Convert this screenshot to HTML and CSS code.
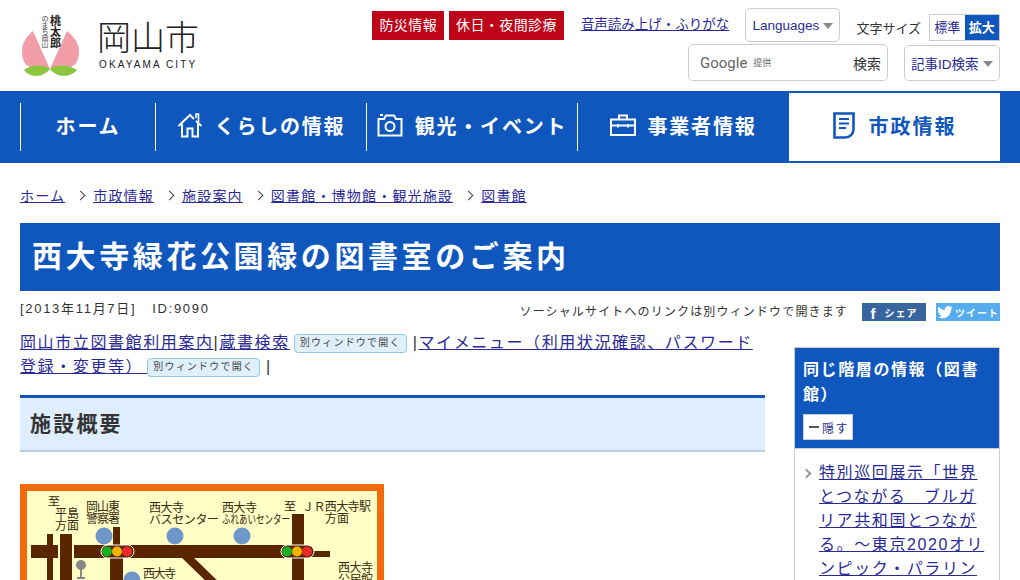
FILE: index.html
```html
<!DOCTYPE html>
<html lang="ja">
<head>
    <meta charset="UTF-8">
    <meta name="viewport" content="width=device-width, initial-scale=1.0">
    <title>西大寺緑花公園緑の図書室のご案内 | 岡山市</title>
    <link rel="stylesheet" href="styles.css">
</head>
<body>

    <header class="cabecera">
        <a class="logo" href="#">
            <svg width="180" height="70" viewBox="0 0 180 70">
                <path d="M13 19 C5 26 2 32 2 39 C2 48 5 53 10 55 C17 54 25 54 30 57 Z" fill="#f29ea9"/>
                <path d="M47 19 C55 26 59 32 59 39 C59 48 56 53 51 55 C44 54 35 54 30 57 Z" fill="#f29ea9"/>
                <path d="M4 58 C9 54 22 51 30 57 C24 65 11 67 4 58 Z" fill="#8cc63f"/>
                <path d="M30 57 C38 51 51 54 57 58 C49 67 36 65 30 57 Z" fill="#8cc63f"/>
                <text class="logo-momo" x="30" y="13">桃</text>
                <text class="logo-momo" x="30" y="24">太</text>
                <text class="logo-momo" x="30" y="35">郎</text>
                <text class="logo-nomachi" x="21.500" y="9">の</text>
                <text class="logo-nomachi" x="21.500" y="15.500">ま</text>
                <text class="logo-nomachi" x="21.500" y="22">ち</text>
                <text class="logo-nomachi" x="21.500" y="28.500">岡</text>
                <text class="logo-nomachi" x="21.500" y="35">山</text>
                <text class="logo-nombre" x="77" y="38">岡山市</text>
                <text class="logo-ingles" x="79" y="56">OKAYAMA CITY</text>
            </svg>
        </a>
        <div class="herramientas">
            <div class="fila">
                <a class="rojo" href="#">防災情報</a>
                <a class="rojo" href="#">休日・夜間診療</a>
                <a class="voz" href="#">音声読み上げ・ふりがな</a>
                <a class="caja idiomas" href="#">Languages<span class="flecha"></span></a>
                <span class="tam-texto">文字サイズ</span>
                <div class="tam-botones">
                    <a href="#">標準</a>
                    <a class="activo" href="#">拡大</a>
                </div>
            </div>
            <div class="fila fila-dos">
                <div class="caja buscador">
                    <span class="google">Google</span>
                    <span class="provisto">提供</span>
                    <span class="buscar">検索</span>
                </div>
                <a class="caja articulo" href="#">記事ID検索<span class="flecha"></span></a>
            </div>
        </div>
    </header>

    <nav class="menu">
        <a class="item item-home" href="#">ホーム</a>
        <a class="item" href="#">
            <svg width="26" height="25" viewBox="0 0 26 25" fill="none" stroke="#fff" stroke-width="2">
                <path d="M1.500 13 L13 2 L17 6 M19 8 L24.500 13"/>
                <path d="M19 5 V1 H21.500 V9" stroke-width="1.600"/>
                <path d="M5 11 V23.500 H10.500 V15.500 H15.500 V23.500 H21 V11"/>
            </svg>
            くらしの情報
        </a>
        <a class="item" href="#">
            <svg width="26" height="23" viewBox="0 0 26 23" fill="none" stroke="#fff" stroke-width="2">
                <path d="M1.500 5 H7 L9 1.500 H17 L19 5 H24.500 V21.500 H1.500 Z"/>
                <circle cx="13" cy="12.500" r="4.500"/>
                <path d="M3 1 H6"/>
            </svg>
            観光・イベント
        </a>
        <a class="item" href="#">
            <svg width="26" height="22" viewBox="0 0 26 22" fill="none" stroke="#fff" stroke-width="2">
                <path d="M1 5.500 H25 V21 H1 Z"/>
                <path d="M9 5 V1.500 H17 V5"/>
                <path d="M1 11.500 H25"/>
                <path d="M8 10 V13.500 M18 10 V13.500"/>
            </svg>
            事業者情報
        </a>
        <a class="item item-activo" href="#">
            <svg width="22" height="27" viewBox="0 0 22 27" fill="none" stroke="#0f57bd" stroke-width="2.600">
                <path d="M1.500 1.500 H20.500 V17 C20.500 22 17 25.500 12 25.500 H1.500 Z"/>
                <path d="M6 7 H16 M6 11.500 H16 M6 16 H13" stroke-width="1.800"/>
            </svg>
            市政情報
        </a>
    </nav>

    <div class="migas">
        <a href="#">ホーム</a>
        <span class="sep"></span>
        <a href="#">市政情報</a>
        <span class="sep"></span>
        <a href="#">施設案内</a>
        <span class="sep"></span>
        <a href="#">図書館・博物館・観光施設</a>
        <span class="sep"></span>
        <a href="#">図書館</a>
    </div>

    <h1 class="titulo">西大寺緑花公園緑の図書室のご案内</h1>

    <div class="info">
        <p class="fecha">[2013年11月7日]&nbsp;&nbsp; ID:9090</p>
        <div class="social">
            <span class="social-nota">ソーシャルサイトへのリンクは別ウィンドウで開きます</span>
            <a class="btn-fb" href="#"><b>f</b>シェア</a>
            <a class="btn-tw" href="#">
                <svg width="16" height="13" viewBox="0 0 24 20"><path fill="#fff" d="M24 2.400c-.9.4-1.800.7-2.800.8 1-.6 1.800-1.600 2.200-2.700-1 .6-2 1-3.100 1.200A4.900 4.900 0 0 0 11.900 6.200C7.800 6 4.200 4 1.700.9c-1.300 2.200-.6 5.100 1.500 6.500-.8 0-1.600-.2-2.200-.6 0 2.400 1.700 4.400 3.900 4.900-.7.2-1.500.2-2.200.1.600 2 2.400 3.400 4.600 3.400A9.900 9.900 0 0 1 0 16.700 14 14 0 0 0 7.500 19c9.100 0 14.300-7.700 14-14.600 1-.7 1.800-1.500 2.500-2z"/></svg>
                ツイート
            </a>
        </div>
    </div>

    <div class="cuerpo">
        <main class="principal">
            <p class="enlaces">
                <a href="#">岡山市立図書館利用案内</a>|<a href="#">蔵書検索</a> <span class="aviso">別ウィンドウで開く</span> |<a href="#">マイメニュー（利用状況確認、パスワード登録・変更等） </a> <span class="aviso">別ウィンドウで開く</span> |
            </p>

            <h2 class="seccion">施設概要</h2>

            <svg class="mapa" width="364" height="300" viewBox="0 0 364 300">
                <rect x="3.500" y="3.500" width="357" height="293" fill="#ffffc6" stroke="#f26a0c" stroke-width="7"/>
                <g fill="#5a2600">
                    <rect x="11" y="61" width="27" height="13"/>
                    <rect x="27" y="50" width="6" height="250"/>
                    <rect x="40" y="50" width="12" height="250"/>
                    <rect x="54" y="61" width="220" height="13"/>
                    <rect x="93" y="43" width="7" height="20"/>
                    <rect x="90" y="70" width="13" height="230"/>
                    <rect x="272" y="30" width="12" height="270"/>
                    <rect x="290" y="67" width="20" height="6"/>
                    <path d="M160 72 H172 L205 104 H193 Z"/>
                </g>
                <g fill="#6f97c9">
                    <circle cx="84" cy="52" r="8.500"/>
                    <circle cx="155" cy="52" r="8.500"/>
                    <circle cx="222" cy="52" r="8.500"/>
                    <circle cx="112" cy="96" r="8.500"/>
                </g>
                <circle cx="61" cy="81" r="5" fill="#888"/>
                <rect x="60" y="85" width="2" height="9" fill="#888"/>
                <rect x="57" y="93" width="8" height="2" fill="#888"/>
                <g>
                    <rect x="81" y="61" width="33" height="13" rx="6.500" fill="#5a2600" stroke="#fff"/>
                    <circle cx="87" cy="67.500" r="5" fill="#19b01f"/>
                    <circle cx="97" cy="67.500" r="5" fill="#f7b500"/>
                    <circle cx="107" cy="67.500" r="5" fill="#ea2a2a"/>
                    <rect x="261" y="61" width="33" height="13" rx="6.500" fill="#5a2600" stroke="#fff"/>
                    <circle cx="267" cy="67.500" r="5" fill="#19b01f"/>
                    <circle cx="277" cy="67.500" r="5" fill="#f7b500"/>
                    <circle cx="287" cy="67.500" r="5" fill="#ea2a2a"/>
                </g>
                <g class="mapa-texto">
                    <text x="28" y="22">至</text>
                    <text x="35" y="34">平島</text>
                    <text x="35" y="46">方面</text>
                    <text x="66" y="27" textLength="34">岡山東</text>
                    <text x="66" y="39" textLength="34">警察署</text>
                    <text x="129" y="28" textLength="35">西大寺</text>
                    <text x="129" y="40" textLength="70">バスセンター</text>
                    <text x="202" y="28" textLength="35">西大寺</text>
                    <text x="202" y="40" textLength="68" lengthAdjust="spacingAndGlyphs">ふれあいセンター</text>
                    <text x="264" y="27">至</text>
                    <text x="282" y="27" textLength="69">ＪＲ西大寺駅</text>
                    <text x="305" y="39">方面</text>
                    <text x="123" y="94" textLength="33">西大寺</text>
                    <text x="318" y="88" textLength="35">西大寺</text>
                    <text x="318" y="100" textLength="35">公民館</text>
                </g>
            </svg>
        </main>

        <aside class="lateral">
            <div class="lateral-cabeza">
                <h2>同じ階層の情報（図書館）</h2>
                <a class="ocultar" href="#"><span class="raya"></span>隠す</a>
            </div>
            <ul class="lateral-lista">
                <li><a href="#">特別巡回展示「世界とつながる　ブルガリア共和国とつながる。～東京2020オリンピック・パラリンピック～」</a></li>
            </ul>
        </aside>
    </div>

</body>
</html>
```

FILE: styles.css
```css
* {
    box-sizing: border-box;
}

html, body {
    height: 580px;
    overflow: hidden;
}

body {
    margin: 0;
    font-family: "Liberation Sans", "Noto Sans CJK JP", sans-serif;
    font-size: 16px;
    color: #333;
    background-color: #fff;
}

a {
    color: #2a2a96;
}

/* cabecera */
.cabecera {
    display: flex;
    justify-content: space-between;
    height: 91px;
    padding: 8px 20px 0 20px;
}

.logo {
    display: block;
    margin-top: 4px;
}

.logo svg {
    overflow: visible;
}

.logo-momo {
    font-size: 11px;
    font-weight: bold;
    fill: #222;
}

.logo-nomachi {
    font-size: 7px;
    fill: #444;
}

.logo-nombre {
    font-size: 34px;
    font-weight: 300;
    fill: #222;
}

.logo-ingles {
    font-size: 10px;
    fill: #222;
    letter-spacing: 2.1px;
}

.herramientas {
    display: flex;
    flex-direction: column;
    align-items: flex-end;
    gap: 2px;
}

.fila {
    display: flex;
    align-items: center;
    height: 34px;
}

.fila-dos {
    height: 37px;
}

.rojo {
    display: block;
    height: 29px;
    line-height: 28px;
    padding: 0 7px;
    margin-right: 5px;
    font-size: 14px;
    letter-spacing: 0.4px;
    color: #fff;
    background-color: #bd0419;
    text-decoration: none;
}

.voz {
    margin: 0 16px 4px 12px;
    font-size: 13.5px;
}

.caja {
    display: flex;
    align-items: center;
    background-color: #fff;
    border: 1px solid #ccc;
    border-radius: 5px;
    text-decoration: none;
}

.idiomas {
    width: 95px;
    height: 34px;
    padding-left: 6px;
    font-size: 13.5px;
}

.flecha {
    display: block;
    margin: 2px 0 0 4px;
    border-top: 6px solid #888;
    border-left: 5px solid transparent;
    border-right: 5px solid transparent;
}

.tam-texto {
    margin: 4px 8px 0 16px;
    font-size: 13px;
    color: #333;
}

.tam-botones {
    display: flex;
    width: 71px;
    height: 27px;
    margin-top: 4px;
    border: 1px solid #ccc;
}

.tam-botones a {
    display: block;
    flex: 1;
    line-height: 25px;
    text-align: center;
    font-size: 13px;
    text-decoration: none;
}

.tam-botones .activo {
    color: #fff;
    font-weight: bold;
    background-color: #0f57bd;
}

.buscador {
    width: 200px;
    height: 37px;
    padding: 0 6px 0 11px;
}

.google {
    font-family: "Roboto", sans-serif;
    font-size: 15px;
    color: #666;
}

.provisto {
    margin-left: 6px;
    font-size: 9px;
    color: #666;
}

.buscar {
    margin-left: auto;
    font-size: 14px;
    color: #333;
}

.articulo {
    width: 96px;
    height: 36px;
    margin-left: 16px;
    padding-left: 6px;
    font-size: 13.5px;
}

/* menu */
.menu {
    display: flex;
    align-items: center;
    height: 72px;
    padding: 2px 20px;
    background-color: #0f57bd;
}

.item {
    display: flex;
    align-items: center;
    justify-content: center;
    gap: 12px;
    width: 211px;
    height: 48px;
    padding-bottom: 4px;
    border-left: 1px solid #fff;
    font-size: 20px;
    font-weight: bold;
    letter-spacing: 1.8px;
    color: #fff;
    text-decoration: none;
    white-space: nowrap;
}

.item-home {
    width: 135px;
}

.item-activo {
    align-self: stretch;
    height: auto;
    width: 211px;
    margin-left: 1px;
    gap: 14px;
    border-left: 0;
    letter-spacing: 2px;
    color: #0f57bd;
    background-color: #fff;
}

/* migas */
.migas {
    display: flex;
    align-items: center;
    padding: 4px 20px 0 20px;
    height: 60px;
    font-size: 14px;
    letter-spacing: 1.2px;
}

.sep {
    width: 7px;
    height: 7px;
    margin: 0 9px 0 12px;
    border-top: 1px solid #444;
    border-right: 1px solid #444;
    transform: rotate(45deg);
}

/* titulo */
.titulo {
    height: 68px;
    margin: 0 20px;
    padding-left: 12px;
    line-height: 68px;
    font-size: 30px;
    letter-spacing: 3.6px;
    color: #fff;
    background-color: #0f57bd;
}

.info {
    display: flex;
    justify-content: space-between;
    height: 40px;
    padding: 0 20px;
}

.fecha {
    margin: 7px 0 0 0;
    font-size: 13px;
    letter-spacing: 1.7px;
}

.social {
    display: flex;
    align-items: center;
    height: 18px;
    margin-top: 12px;
    font-size: 12px;
    letter-spacing: 1.15px;
}

.social-nota {
    margin-bottom: 3px;
}

.btn-fb, .btn-tw {
    display: flex;
    align-items: center;
    justify-content: center;
    width: 64px;
    height: 18px;
    font-size: 10px;
    font-weight: bold;
    letter-spacing: 1px;
    color: #fff;
    text-decoration: none;
}

.btn-fb {
    margin-left: 14px;
    gap: 8px;
    background-color: #39659f;
}

.btn-fb b {
    font-size: 15px;
    margin-top: 3px;
}

.btn-tw {
    margin-left: 10px;
    gap: 2px;
    background-color: #55acee;
}

/* cuerpo */
.cuerpo {
    display: flex;
    justify-content: space-between;
    padding: 0 20px;
}

.principal {
    width: 745px;
}

.enlaces {
    margin: 0;
    line-height: 24px;
    letter-spacing: 1.6px;
}

.aviso {
    display: inline-block;
    height: 19px;
    margin-left: -2px;
    padding: 0 5px;
    line-height: 16px;
    vertical-align: 2px;
    font-size: 10px;
    letter-spacing: 1.2px;
    color: #444;
    background-color: #dff0fb;
    border: 1px solid #8fc8ea;
    border-radius: 4px;
}

.seccion {
    height: 57px;
    margin: 16px 0 32px 0;
    padding-left: 10px;
    line-height: 52px;
    font-size: 21px;
    letter-spacing: 2.2px;
    color: #333;
    background-color: #dfeeff;
    border-top: 3px solid #0f57bd;
    border-bottom: 2px solid #bccde0;
}

.mapa {
    display: block;
}

.mapa-texto {
    font-size: 12px;
    fill: #3a2a10;
}

/* lateral */
.lateral {
    width: 206px;
    height: 300px;
    margin-top: 16px;
    border: 1px solid #ccc;
}

.lateral-cabeza {
    height: 101px;
    padding: 9px 8px 0 8px;
    color: #fff;
    background-color: #0f57bd;
    border-bottom: 1px solid #ccc;
}

.lateral-cabeza h2 {
    margin: 0;
    font-size: 16px;
    line-height: 25px;
    letter-spacing: 1.6px;
}

.ocultar {
    display: flex;
    align-items: center;
    width: 50px;
    height: 26px;
    margin-top: 7px;
    padding-left: 5px;
    font-size: 12px;
    letter-spacing: 1.4px;
    text-decoration: none;
    background-color: #fff;
    border: 1px solid #ccc;
}

.raya {
    width: 10px;
    height: 2px;
    margin-right: 3px;
    background-color: #555;
}

.lateral-lista {
    margin: 0;
    padding: 12px 10px 0 24px;
    list-style: none;
}

.lateral-lista li {
    position: relative;
    line-height: 24px;
    letter-spacing: 1.6px;
}

.lateral-lista li::before {
    content: "";
    position: absolute;
    left: -16px;
    top: 9px;
    width: 5px;
    height: 5px;
    border-top: 2px solid #999;
    border-right: 2px solid #999;
    transform: rotate(45deg);
}
```
